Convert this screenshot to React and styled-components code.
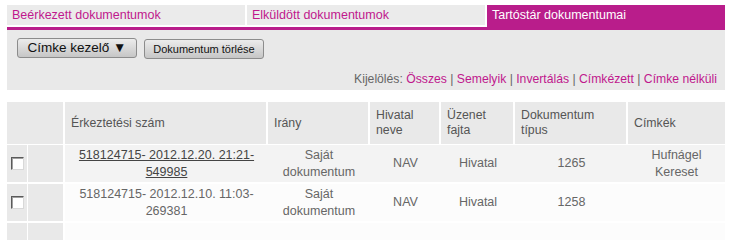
import React from 'react';
import styled, { createGlobalStyle } from 'styled-components';

const Global = createGlobalStyle`
  body {
    margin: 0;
    background: #fff;
    font-family: "Liberation Sans", Arial, sans-serif;
    font-size: 12px;
    color: #555;
  }
`;

const Page = styled.div`
  width: 718px;
  margin: 5px 0 0 7px;
`;

const TabRow = styled.div`
  display: flex;
  align-items: flex-end;
  gap: 2px;
`;

const Tab = styled.div`
  flex: 1;
  height: ${(p) => (p.$active ? '22px' : '20px')};
  margin-bottom: ${(p) => (p.$active ? '0' : '2px')};
  padding-left: 5px;
  padding-bottom: ${(p) => (p.$active ? '2px' : '0')};
  display: flex;
  align-items: center;
  box-sizing: border-box;
  background: ${(p) => (p.$active ? '#b91d8b' : '#ebebeb')};
  color: ${(p) => (p.$active ? '#fff' : '#c0188d')};
  font-size: 12.5px;
`;

const Bar = styled.div`
  height: 3px;
  background: #b91d8b;
`;

const Panel = styled.div`
  background: #e9e9e9;
  padding: 8px 8px 3px 10px;
`;

const Buttons = styled.div`
  display: flex;
  align-items: flex-start;
  gap: 7px;
`;

const Button = styled.button`
  height: 20px;
  width: 120px;
  margin-top: ${(p) => (p.$big ? '0' : '1px')};
  padding: 0;
  border: 1px solid #8c8c8c;
  border-radius: 3px;
  background: linear-gradient(#ececec, #c6c6c6);
  font-family: "Liberation Sans", Arial, sans-serif;
  font-size: ${(p) => (p.$big ? '13.5px' : '11px')};
  color: #111;
  line-height: 18px;
`;

const Selection = styled.div`
  margin-top: 12px;
  text-align: right;
  line-height: 16px;
  font-size: 12.2px;
  color: #666;
`;

const Link = styled.a`
  color: #c0188d;
  text-decoration: none;
`;

const Table = styled.table`
  margin-top: 12px;
  width: 718px;
  border-collapse: separate;
  border-spacing: 0;
  table-layout: fixed;
`;

const Th = styled.th`
  background: #e9e9e9;
  color: #555;
  font-weight: normal;
  font-size: 12.3px;
  text-align: left;
  padding: 0 6px;
  height: 42px;
  line-height: 15px;
  border-right: 2px solid #fff;
  border-bottom: 1px solid #fff;
  &:last-child { border-right: none; }
`;

const Row = styled.tr`
  background: ${(p) => (p.$odd ? '#f3f3f3' : '#fcfcfc')};
`;

const Td = styled.td`
  height: 37px;
  text-align: center;
  font-size: 12.5px;
  line-height: 17px;
  color: #666;
  padding: 0 4px;
  border-bottom: 2px solid #fff;
`;

const SideCell = styled.td`
  background: #e9e9e9;
  border-right: ${(p) => (p.$gap ? '2px' : '1px')} solid #fff;
  border-bottom: 2px solid #fff;
  padding: 0;
`;

const Check = styled.input.attrs({ type: 'checkbox' })`
  appearance: none;
  display: block;
  margin: 0 0 0 4px;
  width: 13px;
  height: 13px;
  background: #fff;
  border: 1px solid;
  border-color: #5a5a5a #d8d8d8 #d8d8d8 #5a5a5a;
  box-shadow: inset 1px 1px 0 #a0a0a0;
  box-sizing: border-box;
`;

const DocLink = styled.a`
  color: #444;
  text-decoration: underline;
`;

const rows = [
  { id: '518124715- 2012.12.20. 21:21-549985', link: true, type: '1265', tags: ['Hufnágel', 'Kereset'] },
  { id: '518124715- 2012.12.10. 11:03-269381', link: false, type: '1258', tags: [] },
];

export default function App() {
  return (
    <Page>
      <Global />
      <TabRow>
        <Tab>Beérkezett dokumentumok</Tab>
        <Tab>Elküldött dokumentumok</Tab>
        <Tab $active>Tartóstár dokumentumai</Tab>
      </TabRow>
      <Bar />
      <Panel>
        <Buttons>
          <Button $big>Címke kezelő ▼</Button>
          <Button>Dokumentum törlése</Button>
        </Buttons>
        <Selection>
          Kijelölés: <Link>Összes</Link> | <Link>Semelyik</Link> | <Link>Invertálás</Link> |{' '}
          <Link>Címkézett</Link> | <Link>Címke nélküli</Link>
        </Selection>
      </Panel>
      <Table>
        <colgroup>
          <col style={{ width: 21 }} />
          <col style={{ width: 37 }} />
          <col style={{ width: 203 }} />
          <col style={{ width: 102 }} />
          <col style={{ width: 71 }} />
          <col style={{ width: 74 }} />
          <col style={{ width: 113 }} />
          <col />
        </colgroup>
        <thead>
          <tr>
            <Th colSpan={2} />
            <Th>Érkeztetési szám</Th>
            <Th>Irány</Th>
            <Th>Hivatal<br />neve</Th>
            <Th>Üzenet<br />fajta</Th>
            <Th>Dokumentum<br />típus</Th>
            <Th>Címkék</Th>
          </tr>
        </thead>
        <tbody>
          {rows.map((r, i) => (
            <Row key={r.id} $odd={i % 2 === 0}>
              <SideCell><Check /></SideCell>
              <SideCell $gap />
              <Td>{r.link ? <DocLink>{r.id}</DocLink> : r.id}</Td>
              <Td>Saját<br />dokumentum</Td>
              <Td>NAV</Td>
              <Td>Hivatal</Td>
              <Td>{r.type}</Td>
              <Td>{r.tags.map((t, j) => <div key={j}>{t}</div>)}</Td>
            </Row>
          ))}
          <Row>
            <SideCell />
            <SideCell $gap />
            <Td colSpan={6} />
          </Row>
        </tbody>
      </Table>
    </Page>
  );
}
